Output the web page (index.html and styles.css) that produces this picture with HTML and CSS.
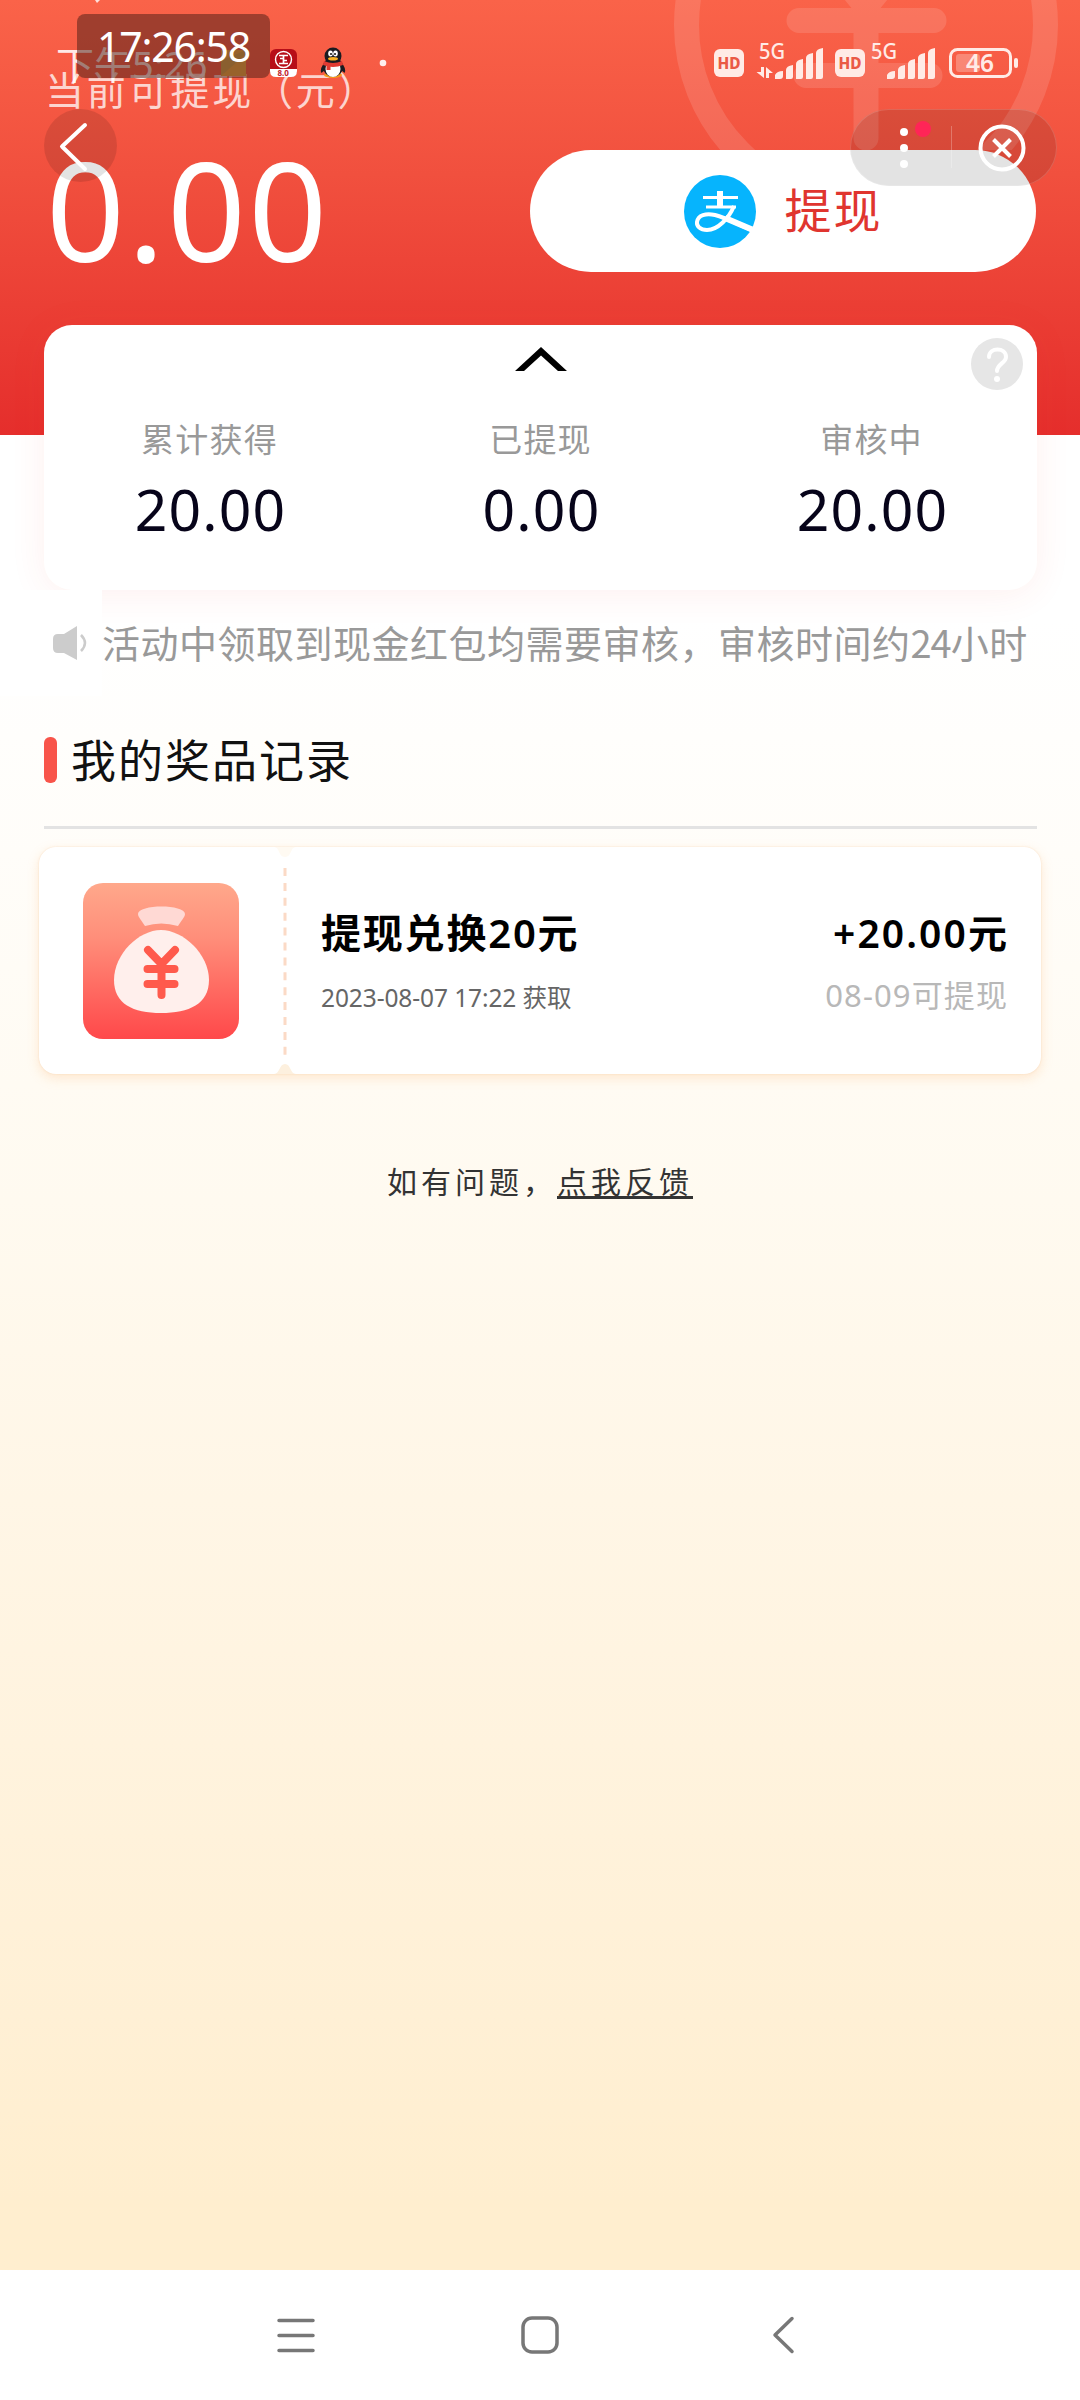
FILE: index.html
```html
<!DOCTYPE html>
<html lang="zh-CN">
<head>
<meta charset="utf-8">
<title>我的奖品</title>
<link rel="stylesheet" href="styles.css">
</head>
<body>
<div class="screen">
  <header class="hero">
    <svg class="watermark" viewBox="0 0 1080 150" width="1080" height="150">
      <g fill="none" stroke="#fff" stroke-width="25" stroke-linecap="round" stroke-linejoin="round">
        <circle cx="866" cy="25" r="179.500"/>
        <path d="M820-50L866 6L912-50M799 20.500H934M806 75.500H930M866 6V138"/>
      </g>
    </svg>
    <p class="hero-label">当前可提现（元）</p>
    <div class="hero-row">
      <div class="balance">0.00</div>
      <button class="withdraw">
        <svg viewBox="0 0 72 73" width="72" height="73">
          <ellipse cx="36" cy="36.500" rx="36" ry="36.500" fill="#06b4fd"/>
          <g fill="none" stroke="#fff">
            <path d="M36 16V31" stroke-width="6"/>
            <path d="M19 22.500H54M22 32H52" stroke-width="3"/>
            <path d="M50 31C45 43 34 55 23 55C16 55 12.500 51 13 47C14 40 22 38 31 40C43 43 55 50 70 56" stroke-width="4"/>
            <path d="M41 43L68 54.500" stroke-width="6"/>
          </g>
        </svg>
        <span>提现</span>
      </button>
    </div>
  </header>

  <section class="summary">
    <svg class="collapse" viewBox="0 0 52 24" width="52" height="24"><path d="M0 24L26 0L52 24H43L26 8.500L9 24Z"/></svg>
    <div class="help">
      <svg viewBox="0 0 52 52" width="52" height="52"><circle cx="26" cy="26" r="26" fill="#e6e6e6"/><path d="M18 19C18 9 35 9 35 19C35 25 26 26 26 33" fill="none" stroke="#fff" stroke-width="4" stroke-linecap="round"/><circle cx="26" cy="41" r="3" fill="#fff"/></svg>
    </div>
    <div class="stats">
      <div class="stat"><span class="stat-name">累计获得</span><span class="stat-value">20.00</span></div>
      <div class="stat"><span class="stat-name">已提现</span><span class="stat-value">0.00</span></div>
      <div class="stat"><span class="stat-name">审核中</span><span class="stat-value">20.00</span></div>
    </div>
  </section>

  <div class="notice">
    <div class="notice-icon">
      <svg viewBox="0 0 34 34" width="34" height="34"><path d="M5 8H11L24 0V34L11 27H5Q0 27 0 22V13Q0 8 5 8Z" fill="#ccc"/><path d="M28 9Q36 17 28 25" fill="none" stroke="#ccc" stroke-width="2.500"/></svg>
    </div>
    <span>活动中领取到现金红包均需要审核，审核时间约<span class="num">24</span>小时</span>
  </div>

  <main class="records">
    <h1 class="records-title">我的奖品记录</h1>
    <article class="ticket">
      <div class="ticket-left">
        <svg viewBox="0 0 156 156" width="156" height="156">
          <defs><linearGradient id="tile" x1="0" y1="0" x2="0" y2="1"><stop offset="0" stop-color="#ffa88b"/><stop offset=".35" stop-color="#ff8e7a"/><stop offset="1" stop-color="#ff484a"/></linearGradient></defs>
          <rect width="156" height="156" rx="20" fill="url(#tile)"/>
          <path d="M55 31C55 21 102 21 102 31C102 34 98 38 95 43Q78 38 62 43C59 38 55 34 55 31Z" fill="#ffd9d4"/>
          <path d="M78 47C100 47 126 71 126 97C126 121 106 130 78 130C50 130 31 121 31 97C31 71 56 47 78 47Z" fill="#ffefec"/>
          <path d="M65 67L78.500 81L92 67M64.500 86H91.500M64.500 101H91.500M78.500 81V112" fill="none" stroke="#ff5a4c" stroke-width="8" stroke-linecap="round" stroke-linejoin="round"/>
        </svg>
      </div>
      <svg class="perforation" viewBox="0 0 22 227" width="22" height="227"><path d="M0 0H22C16 0 18 10 11 10S6 0 0 0Z" fill="#fffaf2"/><path d="M0 227C6 227 5 217 11 217S16 227 22 227Z" fill="#fdf0de"/><path d="M11 21V208" stroke="#fbdac6" stroke-width="3" stroke-dasharray="8 6.900"/></svg>
      <div class="ticket-body">
        <div class="ticket-info"><strong>提现兑换20元</strong><span class="date">2023-08-07 17:22 获取</span></div>
        <div class="ticket-amount"><strong>+20.00元</strong><span class="due">08-09可提现</span></div>
      </div>
    </article>
    <p class="feedback">如有问题，<a>点我反馈</a></p>
  </main>

  <nav class="navbar">
    <svg viewBox="0 0 38 38" width="38" height="38"><path d="M2 4.500H36M2 19.500H36M2 34.500H36"/></svg>
    <svg viewBox="0 0 38 38" width="38" height="38"><rect x="2" y="2" width="34" height="34" rx="9"/></svg>
    <svg viewBox="0 0 38 38" width="38" height="38"><path d="M27 2.500L10 19L27 35.500"/></svg>
  </nav>

  <div class="back">
    <svg viewBox="0 0 73 73" width="73" height="73"><path d="M41 16L18 37.500L41 60" fill="none" stroke="#fff" stroke-width="4" stroke-linecap="round" stroke-linejoin="round"/></svg>
  </div>
  <div class="capsule">
    <svg viewBox="0 0 207 77" width="207" height="77">
      <g fill="#fff"><circle cx="54" cy="23" r="4"/><circle cx="54" cy="39" r="4"/><circle cx="54" cy="55" r="4"/></g>
      <circle cx="73" cy="20" r="8" fill="#ff2557"/>
      <path d="M101.500 17V59" stroke="#fff" stroke-opacity=".25" stroke-width="1"/>
      <g fill="none" stroke="#fff" stroke-width="4"><circle cx="152" cy="39" r="21.500"/><path d="M143.500 30.500L160.500 47.500M160.500 30.500L143.500 47.500"/></g>
    </svg>
  </div>

  <div class="status">
    <span class="status-time">下午5:26</span>
    <svg class="status-icons" viewBox="0 0 1080 100" width="1080" height="100">
      <path d="M95 0H100L97 3Z" fill="#fff" fill-opacity=".8"/>
      <rect x="221" y="50" width="25" height="26" fill="#e9b040"/><path d="M221 76V61L246 50V54Z" fill="#c9a84a"/>
      <g>
        <rect x="270" y="49" width="27" height="28" rx="6" fill="#b70e18"/>
        <path d="M270 69H297V71Q297 77 291 77H276Q270 77 270 71Z" fill="#fff"/>
        <circle cx="283.500" cy="59.500" r="8" fill="none" stroke="#fff" stroke-width="1.400"/>
        <path d="M279 55.500H288M279 63.500H288M283.500 55.500V63.500M280 58.500H283M284 60.500H287" fill="none" stroke="#fff" stroke-width="1.700"/>
        <text x="277.500" y="76" font-size="8" font-weight="700" fill="#c0222c">8.0</text>
      </g>
      <g>
        <ellipse cx="333" cy="75" rx="9" ry="3" fill="#f59a1c"/>
        <path d="M325 62Q319 69 321.500 73L326 69ZM341 62Q347 69 344.500 73L340 69Z" fill="#1b1b20"/>
        <ellipse cx="333" cy="67" rx="10" ry="10" fill="#1b1b20"/>
        <ellipse cx="333" cy="69" rx="7.500" ry="8" fill="#fff"/>
        <ellipse cx="333" cy="56" rx="8.500" ry="8.500" fill="#1b1b20"/>
        <path d="M324 61Q333 65 342 61L343 65Q333 69 323 65Z" fill="#e23a32"/><rect x="326.500" y="65" width="4" height="5" fill="#e23a32"/>
        <ellipse cx="330.500" cy="53.500" rx="2.300" ry="3" fill="#fff"/><ellipse cx="335.500" cy="53.500" rx="2.300" ry="3" fill="#fff"/>
        <circle cx="331" cy="54" r="1" fill="#111"/><circle cx="335" cy="54" r="1" fill="#111"/>
        <ellipse cx="333" cy="58.800" rx="5" ry="1.800" fill="#fbb321"/>
      </g>
      <circle cx="383" cy="63" r="3.300" fill="#fff" fill-opacity=".9"/>
      <g fill="#ffebe6">
        <rect x="714" y="49" width="30" height="28" rx="6"/>
        <rect x="835" y="49" width="30" height="28" rx="6"/>
        <text x="759" y="59" font-size="21" font-weight="500" textLength="26" lengthAdjust="spacingAndGlyphs">5G</text>
        <text x="871" y="59" font-size="21" font-weight="500" textLength="26" lengthAdjust="spacingAndGlyphs">5G</text>
        <path d="M761 67H764V78L756.500 72H761ZM766 78V67L773 73H769V78Z"/>
        <path id="bars" d="M775 79V75Q777 71 783 71V76Q783 79 780 79ZM786 79V70Q786 66 793 65V77Q793 79 791 79ZM796 79V64Q796 60 803 59V77Q803 79 801 79ZM806 79V58Q806 54 813 53V77Q813 79 811 79ZM816 79V53Q816 49 823 48V77Q823 79 821 79Z"/>
        <use href="#bars" x="112"/>
        <rect x="956" y="54" width="24" height="18" rx="3" fill-opacity=".3"/>
        <rect x="1014" y="58" width="4" height="10" rx="2"/>
        <text x="966" y="72" font-size="25" font-weight="600" textLength="28" lengthAdjust="spacingAndGlyphs">46</text>
      </g>
      <rect x="950.500" y="49.500" width="60" height="27" rx="7" fill="none" stroke="#ffebe6" stroke-width="3"/>
      <g fill="#ea5a45" font-size="16" font-weight="800"><text x="717.500" y="68.500" textLength="23" lengthAdjust="spacingAndGlyphs">HD</text><text x="838.500" y="68.500" textLength="23" lengthAdjust="spacingAndGlyphs">HD</text></g>
    </svg>
  </div>
  <div class="clock">17:26:58</div>
</div>
</body>
</html>
```
FILE: styles.css
```css
* { box-sizing: border-box; margin: 0; padding: 0; }
body { font-family: "Noto Sans", "Noto Sans CJK SC", sans-serif; background: #fff; }
svg { display: block; flex: none; }

.screen {
  position: relative;
  width: 1080px;
  height: 2400px;
  overflow: hidden;
  display: flex;
  flex-direction: column;
  background: linear-gradient(#fff 620px, #fffaf0 1200px, #fff4e1 1650px, #ffeecf 2200px);
}

.hero {
  position: relative;
  height: 435px;
  flex: none;
  padding: 62px 44px 0 45px;
  background: linear-gradient(#fa6349, #f1503e 40%, #e52e2c);
}
.watermark { position: absolute; left: 0; top: 0; opacity: .12; }
.hero-label { font-size: 39px; line-height: 56px; letter-spacing: 2.8px; color: rgba(255, 255, 255, .75); }
.hero-row { display: flex; justify-content: space-between; align-items: center; height: 122px; margin-top: 32px; }
.balance { font-size: 138px; line-height: 122px; letter-spacing: 2.500px; color: #fff; margin-top: -6px; margin-left: 1px; }
.withdraw {
  display: flex; align-items: center; justify-content: center; gap: 29px;
  width: 506px; height: 122px; border: 0; border-radius: 61px;
  background: #fff; color: #e0352f;
  font: 47px/60px "Noto Sans", "Noto Sans CJK SC", sans-serif; letter-spacing: 2px;
}
.withdraw span { margin-top: -3px; }

.summary {
  position: relative;
  height: 265px;
  flex: none;
  margin: -110px 43px 0 44px;
  padding-top: 22px;
  border-radius: 28px;
  background: #fff;
  box-shadow: 0 4px 36px rgba(240, 60, 50, .08);
}
.collapse { margin: 0 auto; }
.help { position: absolute; right: 14px; top: 13px; }
.stats { display: grid; grid-template-columns: repeat(3, 1fr); margin-top: 46px; }
.stat { display: flex; flex-direction: column; align-items: center; }
.stat-name { font-size: 33px; line-height: 46px; letter-spacing: 1.200px; color: #999; }
.stat-value { font-size: 57px; line-height: 70px; letter-spacing: 1.200px; color: #07041a; margin-top: 11px; padding-left: 2px; }

.notice { display: flex; align-items: center; height: 106px; flex: none; font-size: 38px; letter-spacing: .500px; color: #999; white-space: nowrap; z-index: 1; }
.notice > span { margin-top: -3px; }
.notice .num { font-family: "Noto Sans CJK SC", sans-serif; letter-spacing: -1px; }
.notice-icon { display: flex; align-items: center; width: 102px; height: 106px; padding-left: 53px; background: #fff; }

.records { flex: 1; }
.records-title {
  display: flex; align-items: center; gap: 14px;
  margin: 0 43px 0 44px; height: 133px; padding-bottom: 5px;
  border-bottom: 3px solid #e3e3e3;
  font-size: 45px; font-weight: 400; letter-spacing: 2px; color: #111;
}
.records-title::before { content: ""; width: 13px; height: 46px; border-radius: 6px; background: #f8544a; margin-top: 3px; }

.ticket {
  display: flex;
  width: 1002px; height: 227px;
  margin: 18px 0 0 39px;
  border-radius: 17px;
  background: #fff;
  box-shadow: 0 4px 12px rgba(250, 180, 110, .28), 0 0 2px rgba(240, 190, 140, .4);
}
.ticket-left { display: flex; align-items: center; width: 235px; padding-left: 44px; }
.ticket-body { display: flex; flex: 1; justify-content: space-between; padding: 60px 34px 0 25px; white-space: nowrap; }
.ticket-info, .ticket-amount { display: flex; flex-direction: column; }
.ticket-amount { align-items: flex-end; }
.ticket strong { font-size: 40px; line-height: 52px; font-weight: 600; letter-spacing: 1.800px; color: #000; }
.ticket .ticket-amount strong { font-size: 39px; letter-spacing: 2.100px; margin-right: -2px; }
.date { font-size: 24.500px; line-height: 36px; color: #666; margin-top: 21px; letter-spacing: -.1px; }
.due { font-size: 31px; line-height: 40px; color: #b8b8b8; margin-top: 16px; letter-spacing: 1.100px; margin-right: -1px; }

.feedback { margin-top: 86px; text-align: center; font-size: 30px; line-height: 44px; letter-spacing: 4px; color: #333; }
.feedback a { text-decoration: underline; text-decoration-thickness: 3px; text-underline-offset: 3px; }

.navbar {
  display: flex; justify-content: center; gap: 206px;
  height: 130px; flex: none; padding-top: 46px;
  background: #fff;
}
.navbar svg { fill: none; stroke: #777; stroke-width: 3.500; stroke-linecap: round; stroke-linejoin: round; }

.back { position: absolute; left: 44px; top: 109px; border-radius: 50%; background: rgba(0, 0, 0, .11); }
.capsule { position: absolute; left: 850px; top: 109px; border-radius: 39px; background: rgba(0, 0, 0, .11); box-shadow: inset 0 0 0 1px rgba(255, 255, 255, .15); }
.status { position: absolute; left: 0; top: 0; width: 1080px; height: 100px; }
.status-icons { position: absolute; left: 0; top: 0; }
.status-time { position: absolute; left: 56px; top: 38px; font-size: 38px; line-height: 52px; color: rgba(255, 255, 255, .9); white-space: nowrap; }
.clock {
  position: absolute; left: 77px; top: 14px; width: 193px; height: 64px;
  border-radius: 8px; background: rgba(85, 35, 25, .55);
  font-size: 41px; line-height: 64px; letter-spacing: -1.200px; text-align: center; color: #fff;
}
```
